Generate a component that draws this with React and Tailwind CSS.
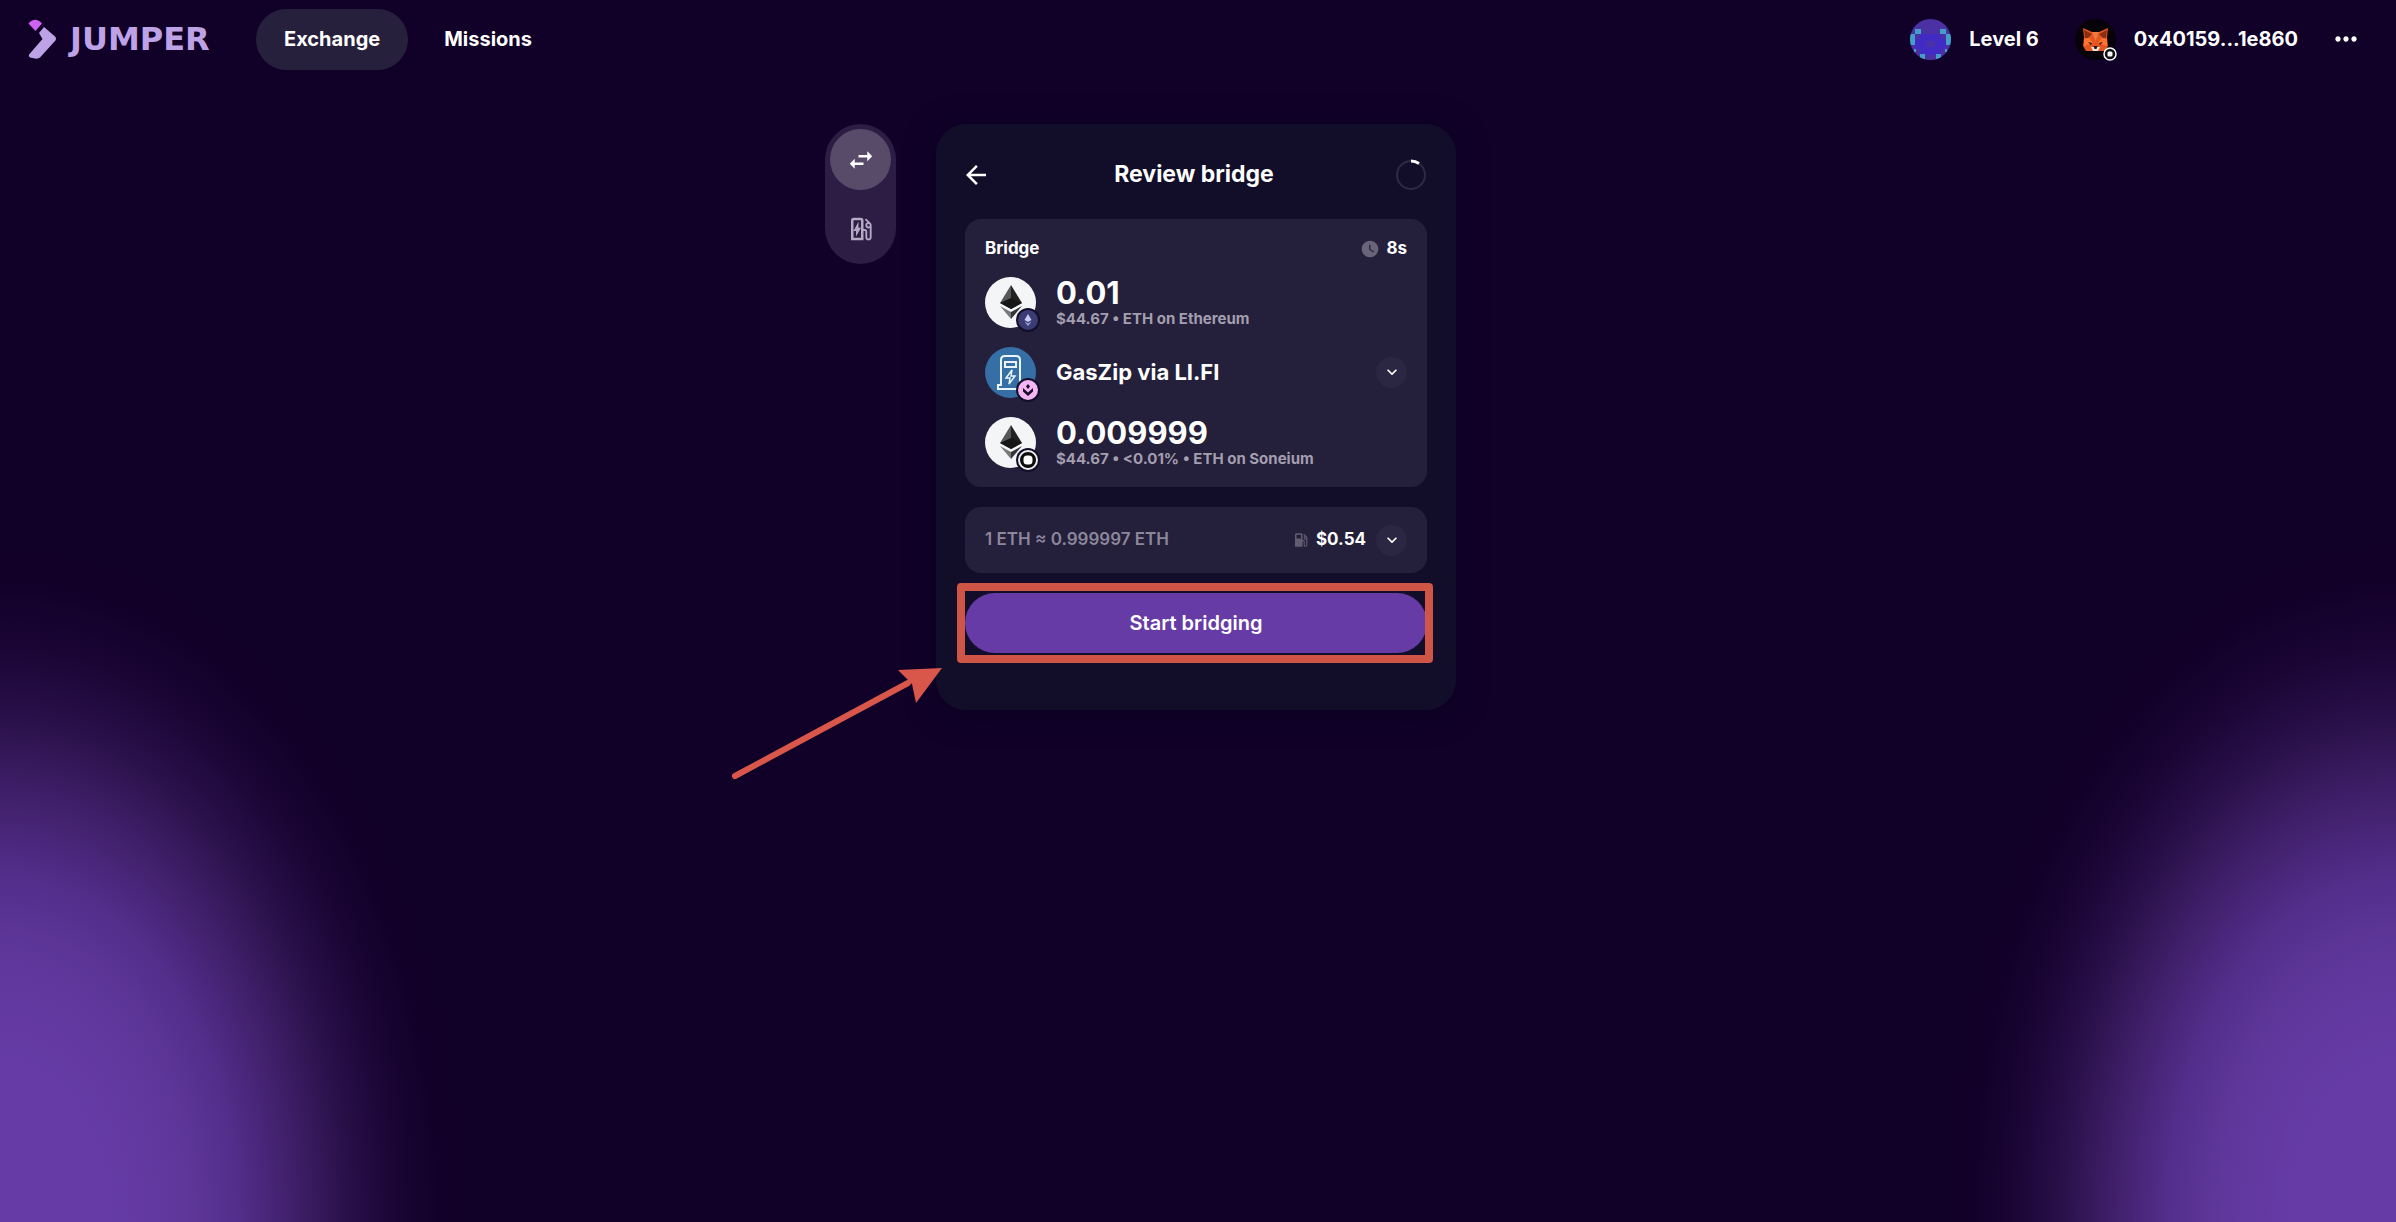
import React from "react";
import { MdArrowBack, MdOutlineEvStation, MdSwapHoriz, MdLocalGasStation, MdWatchLater, MdKeyboardArrowDown, MdMoreHoriz } from "react-icons/md";

export default function App() {
  return (
    <div
      className="
        min-h-screen w-full overflow-hidden text-white font-['Inter',sans-serif]
        bg-[#110028]
        bg-[radial-gradient(440px_640px_at_0%_100%,#663ba5_25%,#5f379b_42%,#532e8b_54%,#3f1f69_67%,#291049_79%,#1a0535_90%,#130029_100%,transparent_108%),radial-gradient(425px_640px_at_100%_100%,#663ba5_25%,#5f379b_42%,#532e8b_54%,#3f1f69_67%,#291049_79%,#1a0535_90%,#130029_100%,transparent_108%)]
      "
    >
      <Navbar />

      <main className="grid grid-cols-[1fr_520px_1fr] items-start mt-[46px] pr-1">
        <ModeTabs />
        <Widget />
      </main>
    </div>
  );
}

function Navbar() {
  return (
    <header className="flex items-center justify-between h-[78px] pl-7 pr-[30px]">
      <div className="flex items-center">
        <a href="#" className="flex items-center gap-3.5 text-[#bda3e6]">
          <LogoMark />
          <span className="w-[146px] text-[32px] leading-8 font-bold font-['DejaVu_Sans',sans-serif]">JUMPER</span>
        </a>

        <nav className="flex items-center ml-10 text-xl font-bold">
          <a href="#" className="h-[61px] px-7 flex items-center rounded-full bg-[#26203c]">Exchange</a>
          <a href="#" className="h-[61px] px-9 flex items-center">Missions</a>
        </nav>
      </div>

      <div className="flex items-center text-xl font-bold">
        <button className="flex items-center gap-[18px]">
          <LevelAvatar />
          Level 6
        </button>
        <button className="flex items-center gap-[18px] ml-9">
          <WalletAvatar />
          0x40159...1e860
        </button>
        <button aria-label="More" className="ml-7 p-1">
          <MdMoreHoriz className="size-8" />
        </button>
      </div>
    </header>
  );
}

/* Swap / gas switcher on the left of the widget */
function ModeTabs() {
  return (
    <div className="justify-self-end mr-10 p-[5px] rounded-full bg-[#2d1c43] flex flex-col gap-2">
      <button aria-label="Swap" className="size-[61px] rounded-full bg-[#584a69] flex items-center justify-center">
        <MdSwapHoriz className="size-[30px]" />
      </button>
      <button aria-label="Gas" className="size-[61px] rounded-full text-[#b5a9c4] flex items-center justify-center">
        <MdOutlineEvStation className="size-[30px]" />
      </button>
    </div>
  );
}

function Widget() {
  return (
    <section className="rounded-[30px] bg-[#120e29] px-[29px] pb-[57px] shadow-[0_4px_30px_rgba(5,0,30,0.5)]">
      <div className="relative flex items-center justify-center h-[95px] pt-1.5">
        <button aria-label="Back" className="absolute left-0 -ml-1">
          <MdArrowBack className="size-[30px]" />
        </button>
        <h1 className="pr-1 text-[23px] font-bold">Review bridge</h1>
        <svg viewBox="0 0 32 32" className="absolute right-0 size-8" fill="none" strokeWidth="2">
          <circle cx="16" cy="16" r="14" stroke="#2e2a43" />
          <path d="M16 2a14 14 0 0 1 8 2.5" stroke="#fff" strokeWidth="3" />
        </svg>
      </div>

      <div className="rounded-2xl bg-[#241f3a] px-5 pt-[18px] h-[268px]">
        <div className="flex items-center justify-between h-6 text-[17px] font-bold">
          <h2>Bridge</h2>
          <span className="flex items-center gap-1.5">
            <MdWatchLater className="size-5 text-[#696479]" />
            8s
          </span>
        </div>

        <div className="mt-1.5">
          <TokenRow amount="0.01" details={["$44.67", "ETH on Ethereum"]} badge={<EthereumBadge />} />
          <div className="h-[70px] flex items-center">
            <IconWithBadge badge={<LifiBadge />}>
              <GasZipIcon />
            </IconWithBadge>
            <p className="ml-5 grow text-[22px] font-bold">GasZip via LI.FI</p>
            <ExpandButton label="Show route" />
          </div>
          <TokenRow amount="0.009999" details={["$44.67", "<0.01%", "ETH on Soneium"]} badge={<SoneiumBadge />} />
        </div>
      </div>

      <div className="mt-5 h-[66px] rounded-2xl bg-[#241f3a] px-5 flex items-center justify-between text-[17px]">
        <p className="font-semibold text-[#8d879c]">1 ETH ≈ 0.999997 ETH</p>
        <div className="flex items-center font-bold">
          <MdLocalGasStation className="size-[18px] mr-1.5 text-[#625c73]" />
          $0.54
          <span className="ml-2.5 flex"><ExpandButton label="Show fees" /></span>
        </div>
      </div>

      <div className="relative mt-5">
        <button className="w-full h-[60px] rounded-full bg-[#663ba5] text-xl font-semibold">
          Start bridging
        </button>
        <div className="absolute -left-2 -right-1.5 -inset-y-2.5 border-8 border-[#cf5547] rounded-sm pointer-events-none" />
        <Arrow />
      </div>
    </section>
  );
}

function TokenRow({ amount, details, badge }) {
  return (
    <div className="h-[70px] flex items-center">
      <IconWithBadge badge={badge}>
        <EthIcon />
      </IconWithBadge>
      <div className="ml-5 pt-0.5">
        <p className="text-[31px] leading-8 font-bold">{amount}</p>
        <p className="text-[15px] leading-5 font-bold text-[#a39eaf]">{details.join(" • ")}</p>
      </div>
    </div>
  );
}

function IconWithBadge({ children, badge }) {
  return (
    <div className="relative size-[51px] shrink-0">
      {children}
      <div className="absolute -right-1 -bottom-1 size-6 rounded-full bg-[#120e29] p-0.5">{badge}</div>
    </div>
  );
}

function ExpandButton({ label }) {
  return (
    <button aria-label={label} className="size-[31px] rounded-full bg-[#2b2641] flex items-center justify-center">
      <MdKeyboardArrowDown className="size-5" />
    </button>
  );
}

function Arrow() {
  return (
    <svg viewBox="0 0 212 116" className="absolute right-[485px] top-[73px] w-[212px] h-[116px] pointer-events-none">
      <path d="M5 110 178 17" stroke="#d8574a" strokeWidth="6" strokeLinecap="round" />
      <path d="M168 4 212 2 186 37 182 18Z" fill="#d8574a" />
    </svg>
  );
}

function LogoMark() {
  return (
    <svg viewBox="0 0 28 40" className="w-7 h-10">
      <path d="M0.500 4.500Q7-3 14 4.500L7.500 12Z" fill="#cf62f0" />
      <path d="M16 8 27 17.500Q29 19.500 27 22L12 38.500Q10 40 7 39.500L2 38.500Q0 37 1.500 35L14.500 20 11 14Z" fill="#bda3e6" />
    </svg>
  );
}

function LevelAvatar() {
  return (
    <svg viewBox="0 0 41 41" className="size-[41px]">
      <clipPath id="level"><circle cx="20.500" cy="20.500" r="20.500" /></clipPath>
      <g clipPath="url(#level)">
        <path d="M0 0h41v41H0z" fill="#4c31a4" />
        <path d="M10 15h21v5h5v10h-5v6H10v-6H5V20h5z" fill="#422bc4" />
        <path d="M17 22h8v6h-8z" fill="#4c31a4" />
        <path d="M5 10h6v5H5v11H0V15h5zM30 10h6v5h5v11h-5V15h-6zM10 35h5v6h-5zM26 35h5v6h-5zM4 30h2v3H4zM35 30h2v3h-2z" fill="#42a0c8" />
      </g>
    </svg>
  );
}

function WalletAvatar() {
  return (
    <div className="relative size-[41px]">
      <svg viewBox="0 0 41 41" className="size-[41px]">
        <circle cx="20.500" cy="20.500" r="20.500" fill="#050208" />
        <path d="M8 9 17 13h7l9-4-1 10 1 8-3 5H11l-3-5 1-8z" fill="#e4551f" />
        <path d="M9 11 17 15 13 19 10 19zM32 11 24 15 28 19 31 19z" fill="#8a2d14" />
        <path d="M17 13h7l-3.500 9z" fill="#f07a3c" />
        <path d="M9 20 14 19 18 24 9 27zM32 20 27 19 23 24 32 27z" fill="#ff7432" />
        <path d="M13 23l4 1-1 2zM28 23l-4 1 1 2z" fill="#3b1510" />
        <path d="M16 28h9l-2 4h-5z" fill="#f6e3da" />
        <path d="M18.500 27h4l-1 3h-2z" fill="#2a1210" />
      </svg>
      <svg viewBox="0 0 14 14" className="absolute -right-px -bottom-px size-[14px]">
        <circle cx="7" cy="7" r="6" fill="#111" stroke="#fff" strokeWidth="1.500" />
        <rect x="4.500" y="4.500" width="5" height="5" rx="1.500" fill="#fff" />
      </svg>
    </div>
  );
}

function EthIcon() {
  return (
    <svg viewBox="0 0 51 51" className="size-[51px]">
      <circle cx="25.500" cy="25.500" r="25.500" fill="#f4f5f7" />
      <path d="M26 8 15 26 26 32z" fill="#55585a" />
      <path d="M26 8 37 26 26 32z" fill="#222" />
      <path d="M15 26 26 21 37 26 26 32z" fill="#161616" />
      <path d="M15 29 26 42V35z" fill="#77797a" />
      <path d="M37 29 26 42V35z" fill="#343534" />
    </svg>
  );
}

function GasZipIcon() {
  return (
    <svg viewBox="0 0 51 51" className="size-[51px]" fill="none" stroke="#e9f4fb" strokeWidth="2">
      <circle cx="25.500" cy="25.500" r="25.500" fill="#356fa6" stroke="none" />
      <path d="M16 38V13q0-4 4-4h11q4 0 4 4v25h3v4H13v-4z" />
      <path d="M20 15h11v5H20z" />
      <path d="M27 23 21 31h4l-1 6 6-8h-4z" strokeWidth="1.500" />
    </svg>
  );
}

function EthereumBadge() {
  return (
    <svg viewBox="0 0 20 20" className="size-5">
      <circle cx="10" cy="10" r="10" fill="#3c3c75" />
      <path d="M10 4 6.500 10 10 12 13.500 10z" fill="#c9cdf2" />
      <path d="M6.500 11.500 10 16 13.500 11.500 10 13.500z" fill="#a6abdf" />
    </svg>
  );
}

function LifiBadge() {
  return (
    <svg viewBox="0 0 20 20" className="size-5">
      <circle cx="10" cy="10" r="10" fill="#f5b5f3" />
      <path d="M10 4 12 6.500 10 9 8 6.500z" fill="#1a0b28" />
      <path d="M5 8 10 12.500 15 8V11.500L10 16 5 11.500z" fill="#1a0b28" />
    </svg>
  );
}

function SoneiumBadge() {
  return (
    <svg viewBox="0 0 20 20" className="size-5">
      <circle cx="10" cy="10" r="9" fill="#0c0c0c" stroke="#eee" strokeWidth="2" />
      <rect x="5.500" y="5.500" width="9" height="9" rx="3.500" fill="#fff" />
    </svg>
  );
}
